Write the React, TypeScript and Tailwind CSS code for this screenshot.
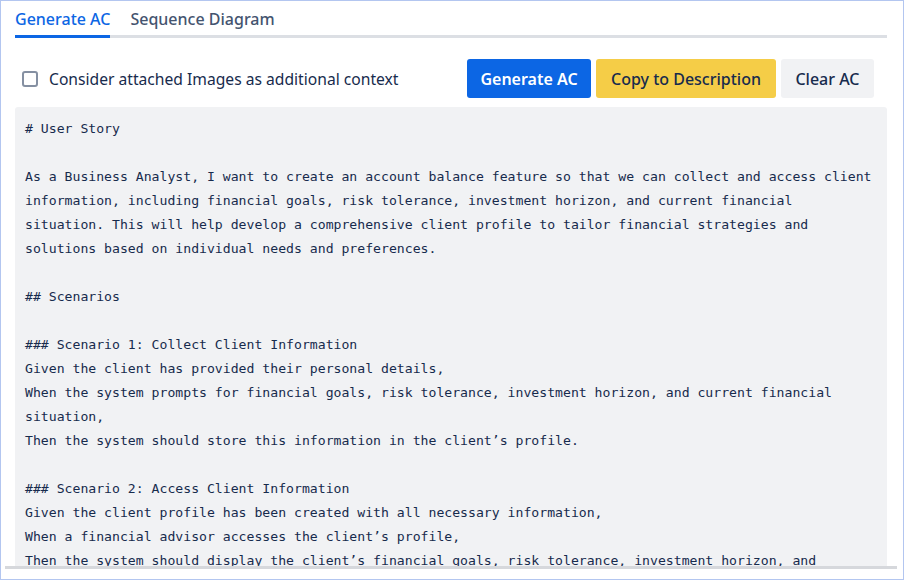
import React from "react";

const lines = [
  "# User Story",
  "",
  "As a Business Analyst, I want to create an account balance feature so that we can collect and access client",
  "information, including financial goals, risk tolerance, investment horizon, and current financial",
  "situation. This will help develop a comprehensive client profile to tailor financial strategies and",
  "solutions based on individual needs and preferences.",
  "",
  "## Scenarios",
  "",
  "### Scenario 1: Collect Client Information",
  "Given the client has provided their personal details,",
  "When the system prompts for financial goals, risk tolerance, investment horizon, and current financial",
  "situation,",
  "Then the system should store this information in the client\u2019s profile.",
  "",
  "### Scenario 2: Access Client Information",
  "Given the client profile has been created with all necessary information,",
  "When a financial advisor accesses the client\u2019s profile,",
  "Then the system should display the client\u2019s financial goals, risk tolerance, investment horizon, and",
  "current financial situation.",
  "",
  "### Scenario 3: Update Client Information",
  "Given the client has an existing profile,",
];

export default function App() {
  return (
    <div
      className="flex flex-col w-[904px] h-[580px] bg-white border border-[#b3c6f0] pl-[4px] pr-[6px] pb-[10px] text-[#172b4d]"
      style={{ fontFamily: '"Noto Sans", "Open Sans", sans-serif' }}
    >
      <div className="flex-1 min-h-0 overflow-hidden px-[10px]">
        <div className="flex gap-[20px] border-b-[3px] border-[#dcdfe4] pt-[6px]">
          <button className="-mb-[3px] border-b-[3px] border-[#0c66e4] pb-[4px] text-[16px] leading-6 font-medium text-[#0c66e4]">
            Generate AC
          </button>
          <button className="-mb-[3px] border-b-[3px] border-transparent pb-[4px] text-[16px] leading-6 font-medium text-[#44546f]">
            Sequence Diagram
          </button>
        </div>

        <div className="mt-[21px] flex items-center justify-between pr-[13px]">
          <label className="flex items-center gap-[11px] pl-[7px] text-[15.65px] leading-6 text-[#172b4d]">
            <span className="block w-[16px] h-[16px] rounded-[3px] border-2 border-[#8590a2] bg-white" />
            <span>Consider attached Images as additional context</span>
          </label>
          <div className="flex gap-[5px]">
            <button className="h-[39px] w-[124px] rounded-[3px] bg-[#0c66e4] text-[16px] font-semibold text-white">
              Generate AC
            </button>
            <button className="h-[39px] w-[180px] rounded-[3px] bg-[#f5cd47] text-[16px] font-medium text-[#172b4d]">
              Copy to Description
            </button>
            <button className="h-[39px] w-[93px] rounded-[3px] bg-[#f1f2f4] text-[16px] font-medium text-[#172b4d]">
              Clear AC
            </button>
          </div>
        </div>

        <pre
          className="mt-[9px] rounded-[3px] bg-[#f1f2f4] pl-[10px] pt-[10px] pb-4 text-[13.15px] leading-6 text-[#172b4d] whitespace-pre-wrap"
          style={{ fontFamily: '"DejaVu Sans Mono", monospace' }}
        >
          {lines.join("\n")}
        </pre>
      </div>

      <div className="h-[3px] bg-[#d6d8dc]" />
    </div>
  );
}
